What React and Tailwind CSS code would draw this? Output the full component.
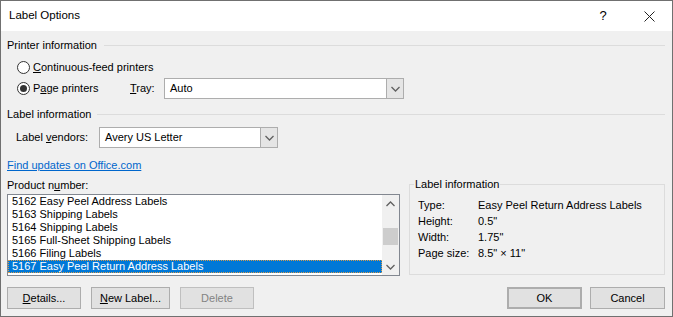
import React from "react";

const items = [
  "5162 Easy Peel Address Labels",
  "5163 Shipping Labels",
  "5164 Shipping Labels",
  "5165 Full-Sheet Shipping Labels",
  "5166 Filing Labels",
  "5167 Easy Peel Return Address Labels",
];

function Chevron({ up }) {
  return (
    <svg width="9" height="6" viewBox="0 0 9 6">
      <path
        d={up ? "M0.5 5 L4.5 1 L8.5 5" : "M0.5 1 L4.5 5 L8.5 1"}
        fill="none"
        stroke="#606060"
        strokeWidth="1.3"
      />
    </svg>
  );
}

function Heading({ text, gap }) {
  return (
    <div className="h-[15px] flex items-center leading-[15px]">
      <span>{text}</span>
      <div className={`flex-1 h-px bg-[#dcdcdc] ${gap}`} />
    </div>
  );
}

function Radio({ checked }) {
  return (
    <div className="w-[13px] h-[13px] rounded-full border border-[#333] bg-white flex items-center justify-center shrink-0">
      {checked && <div className="w-[7px] h-[7px] rounded-full bg-[#333]" />}
    </div>
  );
}

function Combo({ value, width }) {
  return (
    <div className={`${width} h-[21px] border border-[#adadad] bg-white flex`}>
      <div className="flex-1 pl-[5px] flex items-center leading-[15px]">{value}</div>
      <div className="w-[17px] bg-[#e5e5e5] border-l border-[#adadad] flex items-center justify-center">
        <Chevron />
      </div>
    </div>
  );
}

function Button({ children, width, cls = "" }) {
  return (
    <div
      className={`${width} h-[22px] border border-[#adadad] bg-[#e1e1e1] flex items-center justify-center ${cls}`}
    >
      {children}
    </div>
  );
}

export default function App() {
  return (
    <div className="w-[673px] h-[317px] border border-[#707070] flex flex-col bg-[#f0f0f0] text-[11px] text-black font-['Liberation_Sans',Arial,sans-serif]">
      <div className="h-[30px] bg-white flex items-center pl-[8px] shrink-0">
        <span className="text-[11.5px]">Label Options</span>
        <div className="ml-auto flex">
          <div className="w-[46px] h-[30px] flex items-center justify-center text-[13px]">?</div>
          <div className="w-[46px] h-[30px] flex items-center justify-center">
            <svg width="11" height="11" viewBox="0 0 11 11">
              <path d="M0.5 0.5 L10.5 10.5 M10.5 0.5 L0.5 10.5" stroke="#222" strokeWidth="1" />
            </svg>
          </div>
        </div>
      </div>

      <div className="flex-1 flex flex-col pl-[6px] pr-[7px]">
        <div className="mt-[7px]">
          <Heading text="Printer information" gap="ml-[7px]" />
        </div>
        <div className="mt-[4px] h-[20px] flex items-center pl-[10px]">
          <Radio />
          <span className="ml-[3px]">
            <span className="underline">C</span>ontinuous-feed printers
          </span>
        </div>
        <div className="mt-[1px] h-[21px] flex items-center pl-[10px]">
          <Radio checked />
          <span className="ml-[3px] w-[97px]">
            P<span className="underline">a</span>ge printers
          </span>
          <span className="w-[34px]">
            <span className="underline">T</span>ray:
          </span>
          <Combo value="Auto" width="w-[240px]" />
        </div>

        <div className="mt-[8px]">
          <Heading text="Label information" gap="ml-[6px]" />
        </div>
        <div className="mt-[5px] h-[21px] flex items-center pl-[9px]">
          <span className="w-[83px]">
            Label <span className="underline">v</span>endors:
          </span>
          <Combo value="Avery US Letter" width="w-[179px]" />
        </div>

        <div className="mt-[10px] leading-[15px]">
          <span className="text-[#0066cc] underline">Find updates on Office.com</span>
        </div>

        <div className="mt-[5px] flex items-start gap-[9px]">
          <div className="w-[393px] flex flex-col">
            <div className="h-[15px] leading-[15px]">
              Product n<span className="underline">u</span>mber:
            </div>
            <div className="mt-[1px] h-[82px] border border-[#828790] bg-white flex">
              <div className="flex-1 flex flex-col">
                {items.map((it, i) =>
                  i === items.length - 1 ? (
                    <div
                      key={it}
                      className="h-[13px] leading-[13px] pl-[4px] bg-[#0078d7] text-white outline-1 outline-dotted outline-[#d89b4a] -outline-offset-1"
                    >
                      {it}
                    </div>
                  ) : (
                    <div key={it} className="h-[13px] leading-[13px] pl-[4px]">
                      {it}
                    </div>
                  )
                )}
              </div>
              <div className="w-[17px] bg-[#f0f0f0] flex flex-col">
                <div className="h-[17px] flex items-center justify-center">
                  <Chevron up />
                </div>
                <div className="flex-1">
                  <div className="mt-[16px] h-[17px] mx-[1px] bg-[#cdcdcd]" />
                </div>
                <div className="h-[17px] flex items-center justify-center">
                  <Chevron />
                </div>
              </div>
            </div>
          </div>

          <fieldset className="w-[256px] mt-[-1px] h-[98px] border border-[#dcdcdc] px-[8px]">
            <legend className="ml-[-4px] px-[1px] leading-[15px]">Label information</legend>
            <div className="mt-[5px] grid grid-cols-[60px_1fr] leading-[16px] whitespace-nowrap">
              <span>Type:</span>
              <span>Easy Peel Return Address Labels</span>
              <span>Height:</span>
              <span>0.5"</span>
              <span>Width:</span>
              <span>1.75"</span>
              <span>Page size:</span>
              <span>8.5" × 11"</span>
            </div>
          </fieldset>
        </div>

        <div className="mt-auto mb-[7px] flex">
          <Button width="w-[74px]">
            <span>
              <span className="underline">D</span>etails...
            </span>
          </Button>
          <Button width="w-[79px]" cls="ml-[10px]">
            <span>
              <span className="underline">N</span>ew Label...
            </span>
          </Button>
          <Button width="w-[74px]" cls="ml-[10px] bg-[#cccccc] border-[#bfbfbf] text-[#838383]">
            Delete
          </Button>
          <Button width="w-[75px]" cls="ml-auto border-2 border-[#0078d7]">
            OK
          </Button>
          <Button width="w-[75px]" cls="ml-[8px]">
            Cancel
          </Button>
        </div>
      </div>
    </div>
  );
}
